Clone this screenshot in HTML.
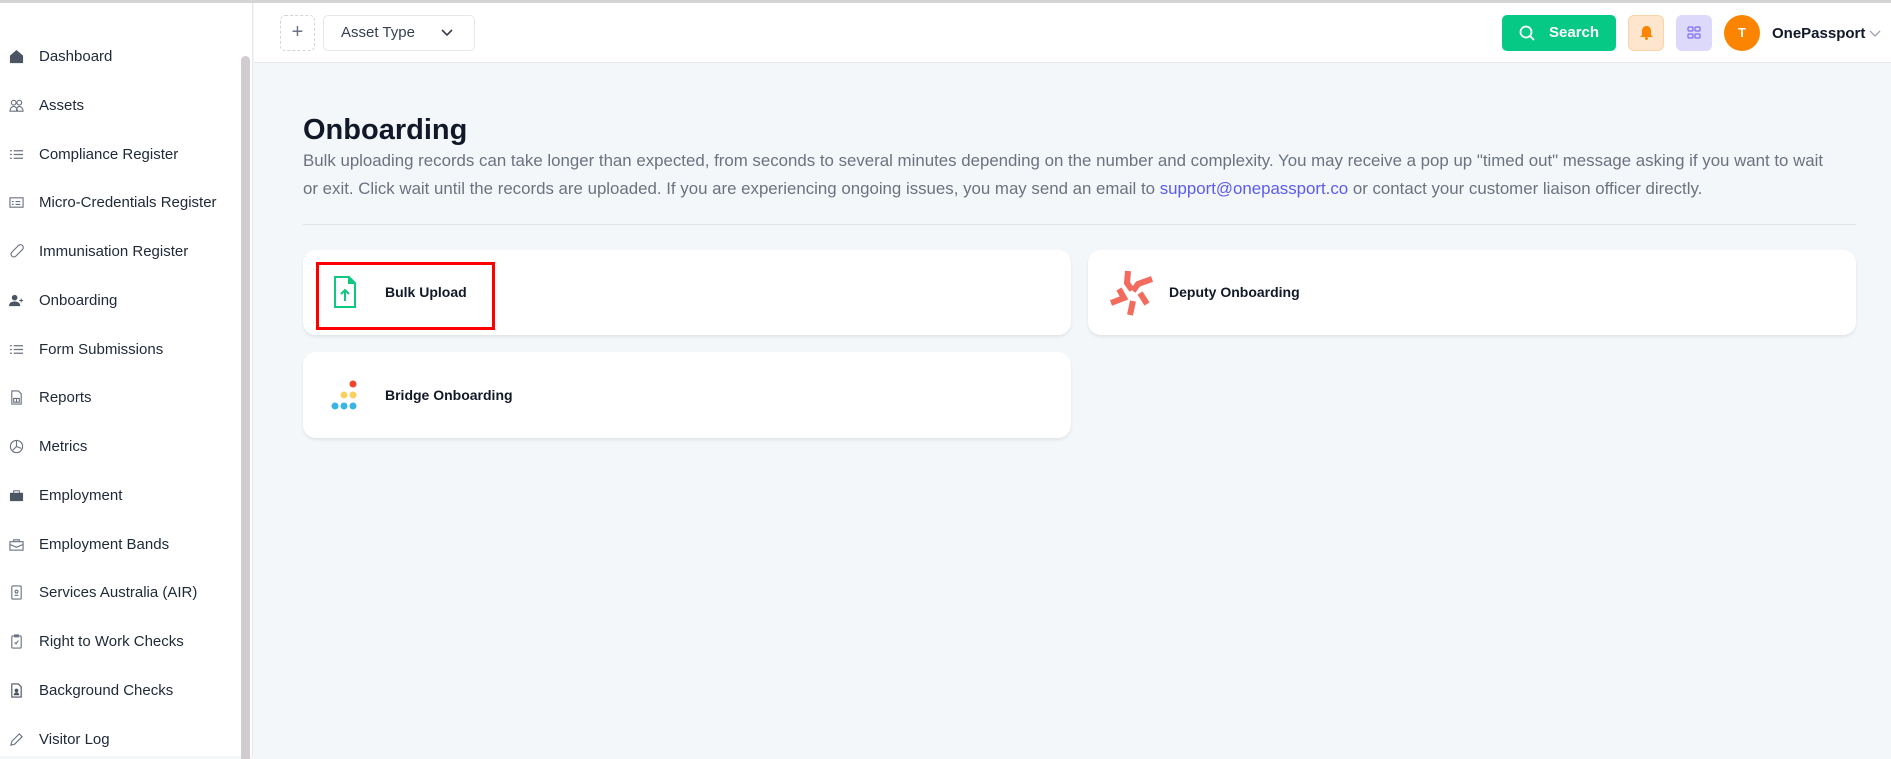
<!DOCTYPE html>
<html><head><meta charset="utf-8"><style>
*{box-sizing:border-box;margin:0;padding:0}
body{width:1891px;height:756px;overflow:hidden;font-family:"Liberation Sans",sans-serif;background:#f4f7fa;position:relative;color:#111827}
.topline{position:absolute;left:0;top:0;width:1891px;height:3px;background:#d4d4d4}
.side{position:absolute;left:0;top:3px;width:253px;height:753px;background:#fff;border-right:1px solid #e5e7eb}
.scroll{position:absolute;left:241px;top:53px;width:9px;height:703px;background:#d0ccd0;border-radius:5px 5px 0 0}
.item{position:absolute;left:0;height:20px;display:flex;align-items:center;font-size:15px;color:#1f2937}
.item svg{position:absolute;left:9px;width:15px;height:15px}
.item span{position:absolute;left:39px;white-space:nowrap}
.header{position:absolute;left:254px;top:3px;right:0;height:60px;background:#fff;border-bottom:1px solid #e5e7eb}
.plus{position:absolute;left:280px;top:15px;width:35px;height:36px;border:1px dashed #d1d5db;border-radius:5px;color:#6b7280;font-size:20px;text-align:center;line-height:33px;background:#fff}
.atype{position:absolute;left:323px;top:15px;width:152px;height:36px;border:1px solid #e5e7eb;border-radius:5px;background:#fff;font-size:15px;color:#374151;padding-left:17px;line-height:34px}
.search{position:absolute;left:1502px;top:15px;width:114px;height:36px;background:#07c986;border-radius:5px;color:#fff;font-weight:bold;font-size:15px;line-height:36px;padding-left:47px}
.bell{position:absolute;left:1628px;top:15px;width:36px;height:36px;background:#fde6cd;border-radius:6px;border:1px solid #f9d4a8}
.apps{position:absolute;left:1676px;top:15px;width:36px;height:36px;background:#ddd9fb;border-radius:6px}
.av{position:absolute;left:1724px;top:15px;width:36px;height:36px;border-radius:50%;background:#fb8500;color:#fff;font-weight:bold;font-size:13px;text-align:center;line-height:36px}
.name{position:absolute;left:1772px;top:25px;font-size:15px;font-weight:bold;color:#111827}
h1{position:absolute;left:303px;top:114px;font-size:29px;font-weight:600;color:#111827}
.p{position:absolute;left:303px;top:147px;width:1580px;font-size:16.85px;line-height:28px;color:#6b7280;white-space:nowrap}
.p a{color:#5b5bf0;text-decoration:none}
.div{position:absolute;left:303px;top:224px;width:1553px;height:1px;background:#e1e5ea}
.card{position:absolute;background:#fff;border-radius:13px;box-shadow:0 2px 3px rgba(0,0,0,.08)}
.card .t{position:absolute;font-size:14px;font-weight:600;color:#111827;white-space:nowrap}
.red{position:absolute;left:316px;top:262px;width:179px;height:68px;border:3px solid #f00}
</style></head><body>
<div class="topline"></div>
<div class="side">
<div class="scroll"></div>
</div>
<div class="item" style="top:46px"><svg viewBox="0 0 16 16"><path d="M8 1 1 7v8h14V7z" fill="#4b5563"/></svg><span>Dashboard</span></div>
<div class="item" style="top:95px"><svg viewBox="0 0 16 16" fill="none" stroke="#6b7280" stroke-width="1.2"><circle cx="5" cy="5" r="2.5"/><circle cx="11" cy="5" r="2.5"/><path d="M1 14c0-3 2-5 4-5s4 2 4 5zM8 14c0-3 1-5 3-5s4 2 4 5z"/></svg><span>Assets</span></div>
<div class="item" style="top:144px"><svg viewBox="0 0 16 16" stroke="#6b7280" stroke-width="1.3"><path d="M1 4h2M5 4h10M1 8h2M5 8h10M1 12h2M5 12h10"/></svg><span>Compliance Register</span></div>
<div class="item" style="top:192px"><svg viewBox="0 0 16 16" fill="none" stroke="#6b7280" stroke-width="1.2"><rect x="1" y="3" width="14" height="10"/><path d="M3 7h2M7 7h5M3 10h2M7 10h5"/></svg><span>Micro-Credentials Register</span></div>
<div class="item" style="top:241px"><svg viewBox="0 0 16 16" fill="none" stroke="#6b7280" stroke-width="1.2"><rect x="5" y="-1" width="6" height="16" rx="3" transform="rotate(45 8 8)"/></svg><span>Immunisation Register</span></div>
<div class="item" style="top:290px"><svg viewBox="0 0 16 16" fill="#4b5563"><circle cx="6" cy="5" r="3"/><path d="M0 14c0-4 3-5 6-5s6 1 6 5z"/><path d="M13 6v4M11 8h4" stroke="#4b5563"/></svg><span>Onboarding</span></div>
<div class="item" style="top:339px"><svg viewBox="0 0 16 16" stroke="#6b7280" stroke-width="1.3"><path d="M1 4h2M5 4h10M1 8h2M5 8h10M1 12h2M5 12h10"/></svg><span>Form Submissions</span></div>
<div class="item" style="top:387px"><svg viewBox="0 0 16 16" fill="none" stroke="#6b7280" stroke-width="1.2"><path d="M3 1h7l3 3v11H3z"/><path d="M5 9h6v4H5zM8 9v4"/></svg><span>Reports</span></div>
<div class="item" style="top:436px"><svg viewBox="0 0 16 16" fill="none" stroke="#6b7280" stroke-width="1.2"><circle cx="8" cy="8" r="6.5"/><path d="M8 2v6l-4 4M8 8l5 2"/></svg><span>Metrics</span></div>
<div class="item" style="top:485px"><svg viewBox="0 0 16 16" fill="#4b5563"><rect x="1" y="5" width="14" height="9" rx="1"/><path d="M5 5V3h6v2" stroke="#4b5563" fill="none"/></svg><span>Employment</span></div>
<div class="item" style="top:534px"><svg viewBox="0 0 16 16" fill="none" stroke="#6b7280" stroke-width="1.2"><rect x="1" y="5" width="14" height="9"/><path d="M5 5V3h6v2M1 8l7 3 7-3"/></svg><span>Employment Bands</span></div>
<div class="item" style="top:582px"><svg viewBox="0 0 16 16" fill="none" stroke="#6b7280" stroke-width="1.2"><rect x="3" y="1" width="10" height="14" rx="1"/><circle cx="8" cy="7" r="1.5"/><path d="M6 11h4"/></svg><span>Services Australia (AIR)</span></div>
<div class="item" style="top:631px"><svg viewBox="0 0 16 16" fill="none" stroke="#6b7280" stroke-width="1.2"><rect x="3" y="2" width="10" height="13" rx="1"/><path d="M6 1h4v2H6zM6 9l1.5 1.5L10 7"/></svg><span>Right to Work Checks</span></div>
<div class="item" style="top:680px"><svg viewBox="0 0 16 16"><path d="M3 1h7l3 3v11H3z" fill="none" stroke="#4b5563" stroke-width="1.2"/><circle cx="8" cy="8" r="2" fill="#4b5563"/><path d="M5 13c0-2 1.5-3 3-3s3 1 3 3z" fill="#4b5563"/></svg><span>Background Checks</span></div>
<div class="item" style="top:729px"><svg viewBox="0 0 16 16" fill="none" stroke="#6b7280" stroke-width="1.2"><path d="M2 14l1-4 8-8 3 3-8 8z"/></svg><span>Visitor Log</span></div>

<div class="header"></div>
<div class="plus">+</div>
<div class="atype">Asset Type<svg style="position:absolute;left:117px;top:13px" width="12" height="8" viewBox="0 0 12 8"><path d="M1 1l5 5 5-5" fill="none" stroke="#374151" stroke-width="1.6"/></svg></div>
<div class="search"><svg style="position:absolute;left:17px;top:10px" width="16" height="16" viewBox="0 0 16 16" fill="none" stroke="#fff" stroke-width="1.8"><circle cx="7" cy="7" r="5.5"/><path d="M11 11l4 4"/></svg>Search</div>
<div class="bell"><svg style="position:absolute;left:11px;top:10px" width="13" height="14" viewBox="0 0 13 14" fill="#fb8500"><path d="M6.5 0C3.5 0 2 2.5 2 5v4L0 11h13l-2-2V5C11 2.5 9.5 0 6.5 0z"/><circle cx="6.5" cy="12.5" r="1.5"/></svg></div>
<div class="apps"><svg style="position:absolute;left:11px;top:11px" width="14" height="14" viewBox="0 0 14 14" fill="none" stroke="#7c6cf0" stroke-width="1.2"><rect x="1" y="1" width="5" height="4" rx="1"/><rect x="8" y="1" width="5" height="4" rx="1"/><rect x="1" y="8" width="5" height="4" rx="1"/><rect x="8" y="8" width="5" height="4" rx="1"/></svg></div>
<div class="av">T</div>
<div class="name">OnePassport</div>
<svg style="position:absolute;left:1869px;top:30px" width="12" height="8" viewBox="0 0 12 8"><path d="M1 1l5 5 5-5" fill="none" stroke="#9ca3af" stroke-width="1.3"/></svg>

<h1>Onboarding</h1>
<div class="p">Bulk uploading records can take longer than expected, from seconds to several minutes depending on the number and complexity. You may receive a pop up "timed out" message asking if you want to wait<br>or exit. Click wait until the records are uploaded. If you are experiencing ongoing issues, you may send an email to <a>support@onepassport.co</a> or contact your customer liaison officer directly.</div>
<div class="div"></div>

<div class="card" style="left:303px;top:250px;width:768px;height:85px">
<svg style="position:absolute;left:30px;top:25px" width="24" height="34" viewBox="0 0 24 34" fill="none" stroke="#10c981" stroke-width="2"><path d="M2 2h14l6 6v24H2z"/><path d="M16 2v6h6" fill="#10c981"/><path d="M12 26V15M8 19l4-4 4 4"/></svg>
<div class="t" style="left:82px;top:34px">Bulk Upload</div></div>
<div class="red"></div>
<div class="card" style="left:1088px;top:250px;width:768px;height:85px">
<svg style="position:absolute;left:20px;top:20px" width="46" height="46" viewBox="0 0 46 46" fill="none" stroke="#f26b5e" stroke-width="6" stroke-linejoin="miter"><path d="M20 1l-1 12 5 7"/><path d="M44 9l-14 5-5 7"/><path d="M39 34l-7-11"/><path d="M22 45l3-14"/><path d="M3 33l13-5-5-9"/></svg>
<div class="t" style="left:81px;top:34px">Deputy Onboarding</div></div>
<div class="card" style="left:303px;top:352px;width:768px;height:86px">
<svg style="position:absolute;left:25px;top:28px" width="30" height="32" viewBox="0 0 30 32"><circle cx="25" cy="4" r="3.5" fill="#f0462a"/><circle cx="16" cy="15" r="3.5" fill="#fcd060"/><circle cx="25" cy="15" r="3.5" fill="#fcd060"/><circle cx="7" cy="26" r="3.5" fill="#3ab4e0"/><circle cx="16" cy="26" r="3.5" fill="#3ab4e0"/><circle cx="25" cy="26" r="3.5" fill="#3ab4e0"/></svg>
<div class="t" style="left:82px;top:35px">Bridge Onboarding</div></div>
</body></html>
